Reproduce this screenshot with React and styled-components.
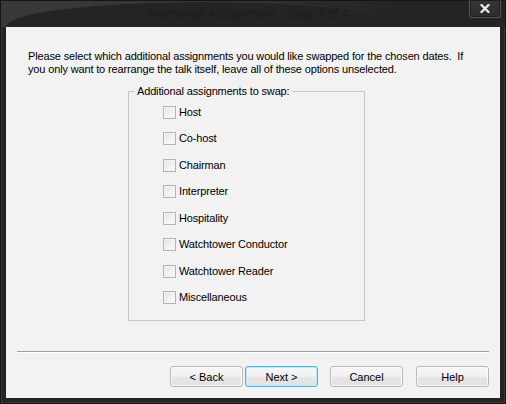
import React from "react";
import styled, { createGlobalStyle } from "styled-components";

const GlobalStyle = createGlobalStyle`
  html, body {
    margin: 0;
    padding: 0;
    background: #1b1b1b;
  }
  body {
    font-family: "Liberation Sans", Arial, sans-serif;
  }
`;

const Window = styled.div`
  width: 506px;
  height: 404px;
  box-sizing: border-box;
  border: 1px solid #151515;
  box-shadow: inset 0 0 0 1px #3a3a3a;
  background: #242424;
  display: flex;
  flex-direction: column;
`;

const TitleBar = styled.div`
  height: 26px;
  display: grid;
  grid-template-columns: 1fr auto;
  align-items: start;
  background:
    radial-gradient(ellipse 198px 24px at 202px 25px, #242424 98%, transparent 100%),
    linear-gradient(to right, #393939 0, #353535 200px, #2a2a2a 320px, #242424 400px);
  border-radius: 2px 2px 0 0;
`;

const Title = styled.div`
  padding-left: 24px;
  text-align: center;
  font-family: "Open Sans", "Noto Sans", sans-serif;
  font-size: 12.5px;
  line-height: 26px;
  color: #1c1c1c;
  white-space: nowrap;
`;

const CloseButton = styled.button`
  width: 32px;
  height: 18px;
  margin: -1px 4px 0 0;
  padding: 0;
  border: 1px solid #555;
  border-top: none;
  border-radius: 0 0 3px 3px;
  background: linear-gradient(#363636, #2c2c2c);
  box-shadow: inset 0 0 0 1px #1e1e1e;
  display: flex;
  align-items: center;
  justify-content: center;
`;

const Client = styled.div`
  flex: 1;
  margin: 0 5px 5px 5px;
  background: #f2f2f2;
  display: flex;
  flex-direction: column;
  font-size: 11px;
  line-height: 13px;
  color: #000;
`;

const Intro = styled.p`
  margin: 23px 0 0 22px;
  white-space: nowrap;
  letter-spacing: -0.15px;
`;

const Group = styled.fieldset`
  box-sizing: border-box;
  width: 237px;
  height: 236px;
  margin: 9px 0 0 122px;
  padding: 0;
  border: 1px solid #c8c8c8;
  min-inline-size: 0;
`;

const Legend = styled.legend`
  margin-left: 6px;
  padding: 0 2px;
  line-height: 13px;
  letter-spacing: -0.15px;
`;

const Options = styled.div`
  display: flex;
  flex-direction: column;
  gap: 13.43px;
  padding: 8px 0 0 34px;
`;

const Option = styled.label`
  display: flex;
  align-items: center;
  gap: 3px;
  height: 13px;
  letter-spacing: -0.15px;
`;

const Box = styled.span`
  box-sizing: border-box;
  width: 13px;
  height: 13px;
  border: 1px solid #b4b4b4;
  background: linear-gradient(135deg, #e2e2e2, #f6f6f6 70%, #fbfbfb);
  box-shadow: inset 0 0 0 1px #f4f4f4;
  flex: none;
`;

const Separator = styled.div`
  margin: 30px 11px 0 11px;
  height: 0;
  border-top: 1px solid #9aa0a6;
  border-bottom: 1px solid #ffffff;
`;

const ButtonRow = styled.div`
  display: flex;
  justify-content: flex-end;
  margin: 13px 11px 0 0;
`;

const Button = styled.button`
  box-sizing: border-box;
  width: 73px;
  height: 21px;
  margin-left: ${(p) => p.$gap}px;
  padding: 0;
  font-family: "Liberation Sans", Arial, sans-serif;
  font-size: 11px;
  color: #000;
  border: 1px solid ${(p) => (p.$default ? "#3cb8f2" : "#b5b9bd")};
  border-radius: 3px;
  background: linear-gradient(#f7f7f7 0%, #f0f0f0 50%, #e6e6e6 51%, #e2e2e2 100%);
  box-shadow: inset 0 0 0 1px ${(p) => (p.$default ? "#bfe8fb" : "#fafafa")};
`;

const options = [
  "Host",
  "Co-host",
  "Chairman",
  "Interpreter",
  "Hospitality",
  "Watchtower Conductor",
  "Watchtower Reader",
  "Miscellaneous",
];

export default function App() {
  return (
    <>
      <GlobalStyle />
      <Window>
        <TitleBar>
          <Title>Rearrange Assignment - Step 3 of 4</Title>
          <CloseButton aria-label="Close">
            <svg width="10" height="9" viewBox="0 0 10 9">
              <path d="M1.5 1 L8.5 8 M8.5 1 L1.5 8" stroke="#ececec" strokeWidth="2.2" strokeLinecap="square" />
            </svg>
          </CloseButton>
        </TitleBar>
        <Client>
          <Intro>
            Please select which additional assignments you would like swapped for the chosen dates.&nbsp; If
            <br />
            you only want to rearrange the talk itself, leave all of these options unselected.
          </Intro>
          <Group>
            <Legend>Additional assignments to swap:</Legend>
            <Options>
              {options.map((o) => (
                <Option key={o}>
                  <Box />
                  {o}
                </Option>
              ))}
            </Options>
          </Group>
          <Separator />
          <ButtonRow>
            <Button $gap={0}>&lt; Back</Button>
            <Button $gap={2} $default>Next &gt;</Button>
            <Button $gap={12}>Cancel</Button>
            <Button $gap={13}>Help</Button>
          </ButtonRow>
        </Client>
      </Window>
    </>
  );
}
